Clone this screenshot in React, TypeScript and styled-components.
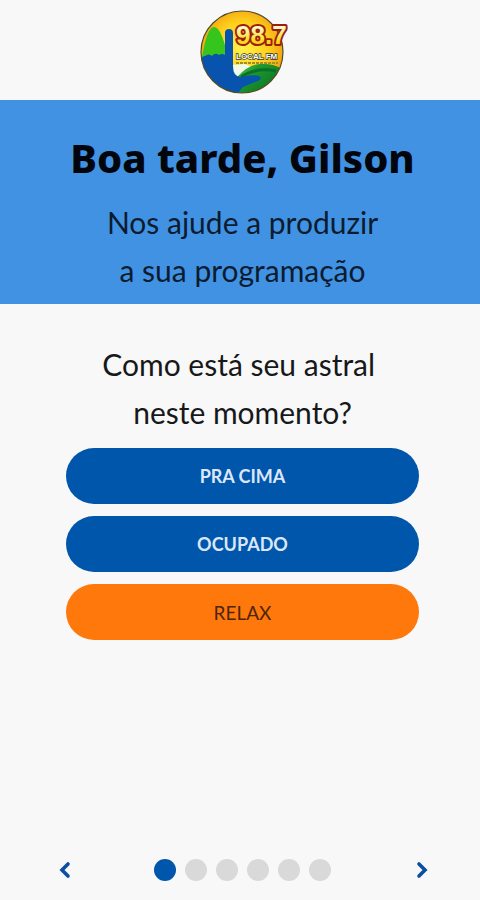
import React, { useState } from 'react';
import styled, { createGlobalStyle } from 'styled-components';

const GlobalStyle = createGlobalStyle`
  * { box-sizing: border-box; }
  body { margin: 0; background: #f8f8f8; }
  button { font: inherit; border: 0; cursor: pointer; }
`;

const Page = styled.div`
  min-height: 100vh;
  display: flex;
  flex-direction: column;
  background: #f8f8f8;
  color: #17181a;
  font-family: Lato, 'Noto Sans', sans-serif;
`;

const Header = styled.header`
  display: flex;
  justify-content: center;
  padding: 8px 0 4px 6px;
`;

const Logo = styled.svg`
  display: block;
  width: 88px;
  height: 88px;
  overflow: visible;
`;

const Greeting = styled.section`
  padding: 32px 0 8px 5px;
  background: #4292e4;
  text-align: center;
`;

const Title = styled.h1`
  margin: 0;
  color: #02060c;
  font-family: 'Noto Sans', sans-serif;
  font-size: 40px;
  line-height: 52px;
  font-weight: 800;
`;

const Lead = styled.p`
  margin: 14px 0 0;
  padding-bottom: 2px;
  color: #0b1c30;
  font-size: 30px;
  line-height: 48px;
`;

const Main = styled.main`
  flex: 1;
  padding: 36px 61px 0 66px;
`;

const Question = styled.h2`
  margin: 0;
  font-size: 30px;
  line-height: 48px;
  font-weight: 400;
  text-align: center;
  white-space: nowrap;
`;

const Options = styled.div`
  display: grid;
  gap: 12px;
  margin-top: 12px;
`;

const Option = styled.button<{ $accent?: boolean }>`
  height: 56px;
  padding: 0 24px;
  border-radius: 28px;
  background: ${({ $accent }) => ($accent ? '#ff780c' : '#0056aa')};
  color: ${({ $accent }) => ($accent ? '#4d2509' : '#dbe7f8')};
  && {
    font-size: ${({ $accent }) => ($accent ? 19 : 18)}px;
    font-weight: ${({ $accent }) => ($accent ? 400 : 700)};
  }
`;

const Pager = styled.nav`
  display: flex;
  align-items: center;
  justify-content: space-between;
  padding: 0 46px 14px 53px;
`;

const Arrow = styled.button`
  display: grid;
  place-items: center;
  width: 24px;
  height: 32px;
  padding: 0;
  background: none;
  color: #0b4fa3;
`;

const Dots = styled.div`
  display: flex;
  gap: 9px;
  padding-right: 12px;
  padding-left: 10px;
`;

const Dot = styled.button<{ $active: boolean }>`
  width: 22px;
  height: 22px;
  padding: 0;
  border-radius: 50%;
  background: ${({ $active }) => ($active ? '#0056aa' : '#d9d9d9')};
`;

const moods = [
  { label: 'PRA CIMA' },
  { label: 'OCUPADO' },
  { label: 'RELAX', accent: true },
];

const steps = 6;

function StationLogo() {
  return (
    <Logo viewBox="0 0 88 88" role="img" aria-label="98.7 Local FM">
      <defs>
        <radialGradient id="sky" cx="0.5" cy="0.45" r="0.55">
          <stop offset="0" stopColor="#fff04a" />
          <stop offset="0.55" stopColor="#ffd31c" />
          <stop offset="1" stopColor="#f29a12" />
        </radialGradient>
        <linearGradient id="field" x1="0" y1="0" x2="1" y2="0.7">
          <stop offset="0" stopColor="#86d45c" />
          <stop offset="0.35" stopColor="#1f9a2f" />
          <stop offset="1" stopColor="#066c22" />
        </linearGradient>
        <linearGradient id="digits" x1="0" y1="0" x2="0" y2="1">
          <stop offset="0.25" stopColor="#fff9c4" />
          <stop offset="0.65" stopColor="#ffe02a" />
          <stop offset="1" stopColor="#ffb400" />
        </linearGradient>
        <clipPath id="disc">
          <circle cx="43" cy="44" r="41" />
        </clipPath>
      </defs>
      <g clipPath="url(#disc)">
        <circle cx="43" cy="44" r="41" fill="url(#sky)" />
        <path d="M2 56C5 36 9 19 15 19C21 19 26 34 29 50V64H0Z" fill="#35c51d" />
        <path d="M33 57L46 56L57 60L40 72H33Z" fill="#effbea" />
        <path d="M38 69Q50 56 62 56Q76 55 88 64V88H33Z" fill="url(#field)" />
        <path d="M42 69Q57 59 77 63" fill="none" stroke="#087028" strokeWidth="3" />
        <path
          d="M0 56Q3 47 6 48Q10 45 13 48Q16 44 20 47Q23 45 26 47V25Q26 21 30 21Q34 21 34 25V58Q34 69 42 69Q52 66 60 68Q64 70 59 73Q49 77 44 79Q40 82 38 90H0Z"
          fill="#0753ae"
        />
      </g>
      <circle cx="43" cy="44" r="41" fill="none" stroke="#514c25" strokeWidth="1.2" />
      <g fontFamily="'Liberation Sans', sans-serif" fontWeight="700">
        <text
          x="37" y="36" fontSize="26"
          fill="url(#digits)" stroke="#9c1f0d" strokeWidth="4"
          strokeLinejoin="round" paintOrder="stroke"
        >98.7</text>
        <text
          x="37" y="51" fontSize="8" fill="#fff" stroke="#343626"
          strokeWidth="1.4" paintOrder="stroke"
        >LOCAL FM</text>
      </g>
      <path d="M37 55H79" stroke="#a68b27" strokeWidth="2" strokeDasharray="3 1" />
    </Logo>
  );
}

function Chevron({ back = false }: { back?: boolean }) {
  return (
    <svg width="12" height="18" viewBox="0 0 12 18" aria-hidden="true">
      <path
        d={back ? 'M9 3L3 9L9 15' : 'M3 3L9 9L3 15'}
        fill="none" stroke="currentColor" strokeWidth="3.6" strokeLinecap="round"
      />
    </svg>
  );
}

export default function App() {
  const [step, setStep] = useState(0);

  return (
    <Page>
      <GlobalStyle />
      <Header><StationLogo /></Header>
      <Greeting>
        <Title>Boa tarde, Gilson</Title>
        <Lead>Nos ajude a produzir<br />a sua programação</Lead>
      </Greeting>
      <Main>
        <Question>Como está seu astral&nbsp;<br />neste momento?</Question>
        <Options>
          {moods.map(({ label, accent }) => (
            <Option key={label} type="button" $accent={accent}>{label}</Option>
          ))}
        </Options>
      </Main>
      <Pager aria-label="Etapas">
        <Arrow type="button" aria-label="Anterior" onClick={() => setStep(Math.max(0, step - 1))}>
          <Chevron back />
        </Arrow>
        <Dots>
          {Array.from({ length: steps }, (_, i) => (
            <Dot
              key={i} type="button" $active={i === step}
              aria-label={`Etapa ${i + 1}`} onClick={() => setStep(i)}
            />
          ))}
        </Dots>
        <Arrow type="button" aria-label="Próxima" onClick={() => setStep(Math.min(steps - 1, step + 1))}>
          <Chevron />
        </Arrow>
      </Pager>
    </Page>
  );
}
